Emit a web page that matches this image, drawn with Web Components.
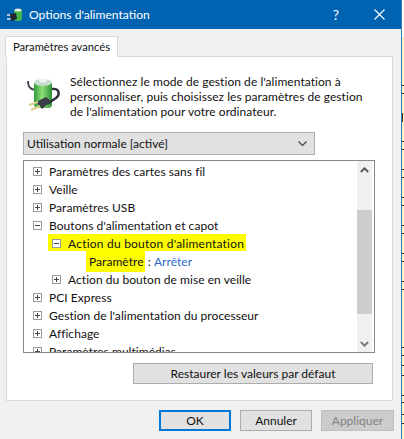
<!DOCTYPE html>
<html lang="fr"><head><meta charset="utf-8">
<style>
html,body{margin:0;padding:0;background:#f0f0f0;}
body{width:404px;height:439px;overflow:hidden;font:12px/15px Lato,"Open Sans",sans-serif;color:#111;}
</style></head><body>
<power-dialog></power-dialog>
<template id="dialog-t"><style>
:host{display:flex;width:404px;height:439px}
.win{width:401px;display:flex;flex-direction:column;background:#f0f0f0;border-right:1px solid #2f7fb5;flex:none}
.body{flex:1;display:flex;flex-direction:column;padding:7px 7px 8px 6px}
.tabs{display:flex;height:20px}
.tab{padding:2px 7px 0 7px;background:#fff;border:1px solid #d9d9d9;border-bottom:0;margin-left:-1px;font-size:11.2px;line-height:16px;box-sizing:border-box;width:113px;white-space:nowrap;height:21px;position:relative;z-index:1}
.panel{height:345px;box-sizing:border-box;background:#fff;border:1px solid #d9d9d9;padding:17px 17px 0 16px;display:flex;flex-direction:column;width:387px}
.intro{display:flex;gap:9px;height:58px;padding-left:4px;box-sizing:border-box;white-space:nowrap;font-size:12px;letter-spacing:.05px}
.intro battery-icon{margin-top:4px}
.footer{margin-top:9px;display:flex;justify-content:flex-end;gap:9px}
.restore{display:flex;justify-content:flex-end;padding:10px 2px 0 0}
</style>
<div class="win"><title-bar>Options d'alimentation</title-bar>
<div class="body"><div class="tabs"><div class="tab">Paramètres avancés</div></div>
<div class="panel"><div class="intro"><battery-icon></battery-icon><div>Sélectionnez le mode de gestion de l'alimentation à<br>personnaliser, puis choisissez les paramètres de gestion<br>de l'alimentation pour votre ordinateur.</div></div>
<plan-select>Utilisation normale [activé]</plan-select>
<tree-box></tree-box>
<div class="restore"><win-button w="240">Restaurer les valeurs par défaut</win-button></div></div>
<div class="footer"><win-button w="72" primary>OK</win-button><win-button w="72">Annuler</win-button><win-button w="73" disabled>Appliquer</win-button></div>
</div></div><desk-edge></desk-edge></template>
<script>
const tpl=id=>document.getElementById(id).content.cloneNode(true);
class PowerDialog extends HTMLElement{constructor(){super();this.attachShadow({mode:'open'}).append(tpl('dialog-t'));}}
class DeskEdge extends HTMLElement{constructor(){super();const ys=[85,93,141,149,169,177,197,205,225,233,253,261,281,289,347,355,365,375,395,402,414,423];
const bg=ys.map(y=>`linear-gradient(#222,#222) 0 ${y}px/100% 1px no-repeat`).join(',');
this.attachShadow({mode:'open'}).innerHTML=`<style>:host{display:block;flex:1;background:linear-gradient(#fff,#fff) 0 0/100% 37px no-repeat,linear-gradient(#5a2a20,#5a2a20) 0 113px/1px 9px no-repeat,${bg},#f8f3cf}</style>`;}}
class TitleBar extends HTMLElement{constructor(){super();this.attachShadow({mode:'open'}).innerHTML=`<style>
:host{display:flex;align-items:center;height:29px;background:#0063b1;color:#fff;padding-left:7px;flex:none}
svg{flex:none}.t{margin-left:6px;flex:1;font-size:12.1px;white-space:nowrap}.q{font-size:14px;width:18px;margin-right:29px;text-align:center}
</style><svg width="16" height="16" viewBox="0 0 16 16"><rect x="7" y="2" width="8" height="12" rx="3" fill="#43b74c"/><ellipse cx="11" cy="3" rx="3.5" ry="1.6" fill="#e4f2e6"/><path d="M0 8h4M0 12h4" stroke="#e8e8e8" stroke-width="1.3"/><path d="M3 7l6-1 1 6-6 2z" fill="#22252b"/></svg><span class="t"><slot></slot></span><span class="q">?</span><svg width="11" height="11" viewBox="0 0 11 11" style="margin-right:16px"><path d="M.5.5l10 10M10.5.5l-10 10" stroke="#fff" stroke-width="1.1"/></svg>`;}}
class BatteryIcon extends HTMLElement{constructor(){super();this.attachShadow({mode:'open'}).innerHTML=`<style>:host{display:block;width:34px;height:34px;flex:none}</style>
<svg width="34" height="34" viewBox="0 0 34 34"><defs><linearGradient id="g" x1="0" x2="1"><stop offset="0" stop-color="#2f9a39"/><stop offset=".45" stop-color="#8fe07a"/><stop offset="1" stop-color="#2d9136"/></linearGradient></defs>
<path d="M1 3C1 10 4 11 8 12" fill="none" stroke="#3e4350" stroke-width="1.8"/>
<rect x="7" y="3" width="18" height="27" rx="4" fill="url(#g)"/><ellipse cx="16" cy="4.5" rx="9" ry="3.5" fill="#c9ddcf"/><ellipse cx="16" cy="2.5" rx="4" ry="2" fill="#eef3ef"/>
<path d="M25 11C33 10 33 17 29 20L20 26" fill="none" stroke="#2f323b" stroke-width="2.4"/>
<path d="M9 24L19 19L24 23L15 31Z" fill="#3a3e49"/><path d="M2 27L11 24M4 32L13 28" stroke="#d8cf8a" stroke-width="2"/>
</svg>`;}}
class PlanSelect extends HTMLElement{constructor(){super();this.attachShadow({mode:'open'}).innerHTML=`<style>
:host{display:flex;align-items:center;box-sizing:border-box;width:292px;height:23px;background:#e1e1e1;border:1px solid #adadad;padding:0 3px;font-size:12px;flex:none;justify-content:space-between;white-space:nowrap}
</style><span><slot></slot></span><svg width="9" height="6" viewBox="0 0 9 6" style="margin-right:4px"><path d="M.5.5l4 4 4-4" fill="none" stroke="#444" stroke-width="1.2"/></svg>`;}}
class WinButton extends HTMLElement{constructor(){super();const w=this.getAttribute('w');this.attachShadow({mode:'open'}).innerHTML=`<style>
:host{display:flex;align-items:center;justify-content:center;box-sizing:border-box;width:${w}px;height:21px;background:#e1e1e1;border:1px solid #adadad;font-size:12px;white-space:nowrap;flex:none}
:host([primary]){border:2px solid #0078d7}
:host([disabled]){background:#ccc;border-color:#bfbfbf;color:#838383}
</style><slot></slot>`;}}
class TreeRow extends HTMLElement{constructor(){super();const l=+this.getAttribute('level')||0,m=this.getAttribute('mark');this.attachShadow({mode:'open'}).innerHTML=`<style>
:host{display:flex;align-items:center;height:18px;white-space:nowrap;padding-left:${l*19+9}px;flex:none;font-size:12px;letter-spacing:.05px}
.b{width:9px;height:9px;flex:none;margin-right:7px;box-sizing:border-box;border:1px solid #9a9a9a;position:relative;background:#fff}
.b:before{content:"";position:absolute;left:1px;right:1px;top:3px;height:1px;background:#444}
.b.p:after{content:"";position:absolute;top:1px;bottom:1px;left:3px;width:1px;background:#444}
.b.n{visibility:hidden;margin-right:0;width:0}
</style><span class="b ${m||''}"></span><slot></slot>`;}}
class TreeBox extends HTMLElement{constructor(){super();this.attachShadow({mode:'open'}).innerHTML=`<style>
:host{display:flex;box-sizing:border-box;width:352px;height:193px;margin-top:5px;border:1px solid #828790;background:#fff;overflow:hidden;flex:none;padding-right:2px}
.list{flex:1;overflow:hidden;min-width:0;padding-top:1px}
mark{background:#fdfd00;color:inherit;padding:3px 1px 3px 3px;margin-left:-3px}
a{color:#2a6ac8;text-decoration:none}
.sb{width:15px;flex:none;background:#f0f0f0;display:flex;flex-direction:column;align-items:center}
.arrow{height:17px;display:flex;align-items:center;justify-content:center;flex:none}
.gap{height:32px;flex:none}.thumb{height:104px;background:#cdcdcd;width:100%;flex:none}.fill{flex:1}
.y{background:linear-gradient(#fdfd00,#fdfd00) no-repeat 24px 0/198px 17px;letter-spacing:.22px}
</style><div class="list">
<tree-row level="0" mark="p">Paramètres des cartes sans fil</tree-row>
<tree-row level="0" mark="p">Veille</tree-row>
<tree-row level="0" mark="p">Paramètres USB</tree-row>
<tree-row level="0" mark="m">Boutons d'alimentation et capot</tree-row>
<tree-row class="y" level="1" mark="m">Action du bouton d'alimentation</tree-row>
<tree-row level="3" mark="n" style="padding-left:63px"><mark>Paramètre</mark>&nbsp;:&nbsp;<a>Arrêter</a></tree-row>
<tree-row level="1" mark="p">Action du bouton de mise en veille</tree-row>
<tree-row level="0" mark="p">PCI Express</tree-row>
<tree-row level="0" mark="p">Gestion de l'alimentation du processeur</tree-row>
<tree-row level="0" mark="p">Affichage</tree-row>
<tree-row level="0" mark="p">Paramètres multimédias</tree-row>
</div><div class="sb"><div class="arrow"><svg width="9" height="6" viewBox="0 0 9 6"><path d="M.8 5l3.7-3.7L8.2 5" fill="none" stroke="#555" stroke-width="1.8"/></svg></div><div class="gap"></div><div class="thumb"></div><div class="fill"></div><div class="arrow"><svg width="9" height="6" viewBox="0 0 9 6"><path d="M.8 1l3.7 3.7L8.2 1" fill="none" stroke="#777" stroke-width="1.8"/></svg></div></div>`;}}
for(const [n,c] of Object.entries({'power-dialog':PowerDialog,'desk-edge':DeskEdge,'title-bar':TitleBar,'battery-icon':BatteryIcon,'plan-select':PlanSelect,'win-button':WinButton,'tree-row':TreeRow,'tree-box':TreeBox}))customElements.define(n,c);
</script></body></html>
